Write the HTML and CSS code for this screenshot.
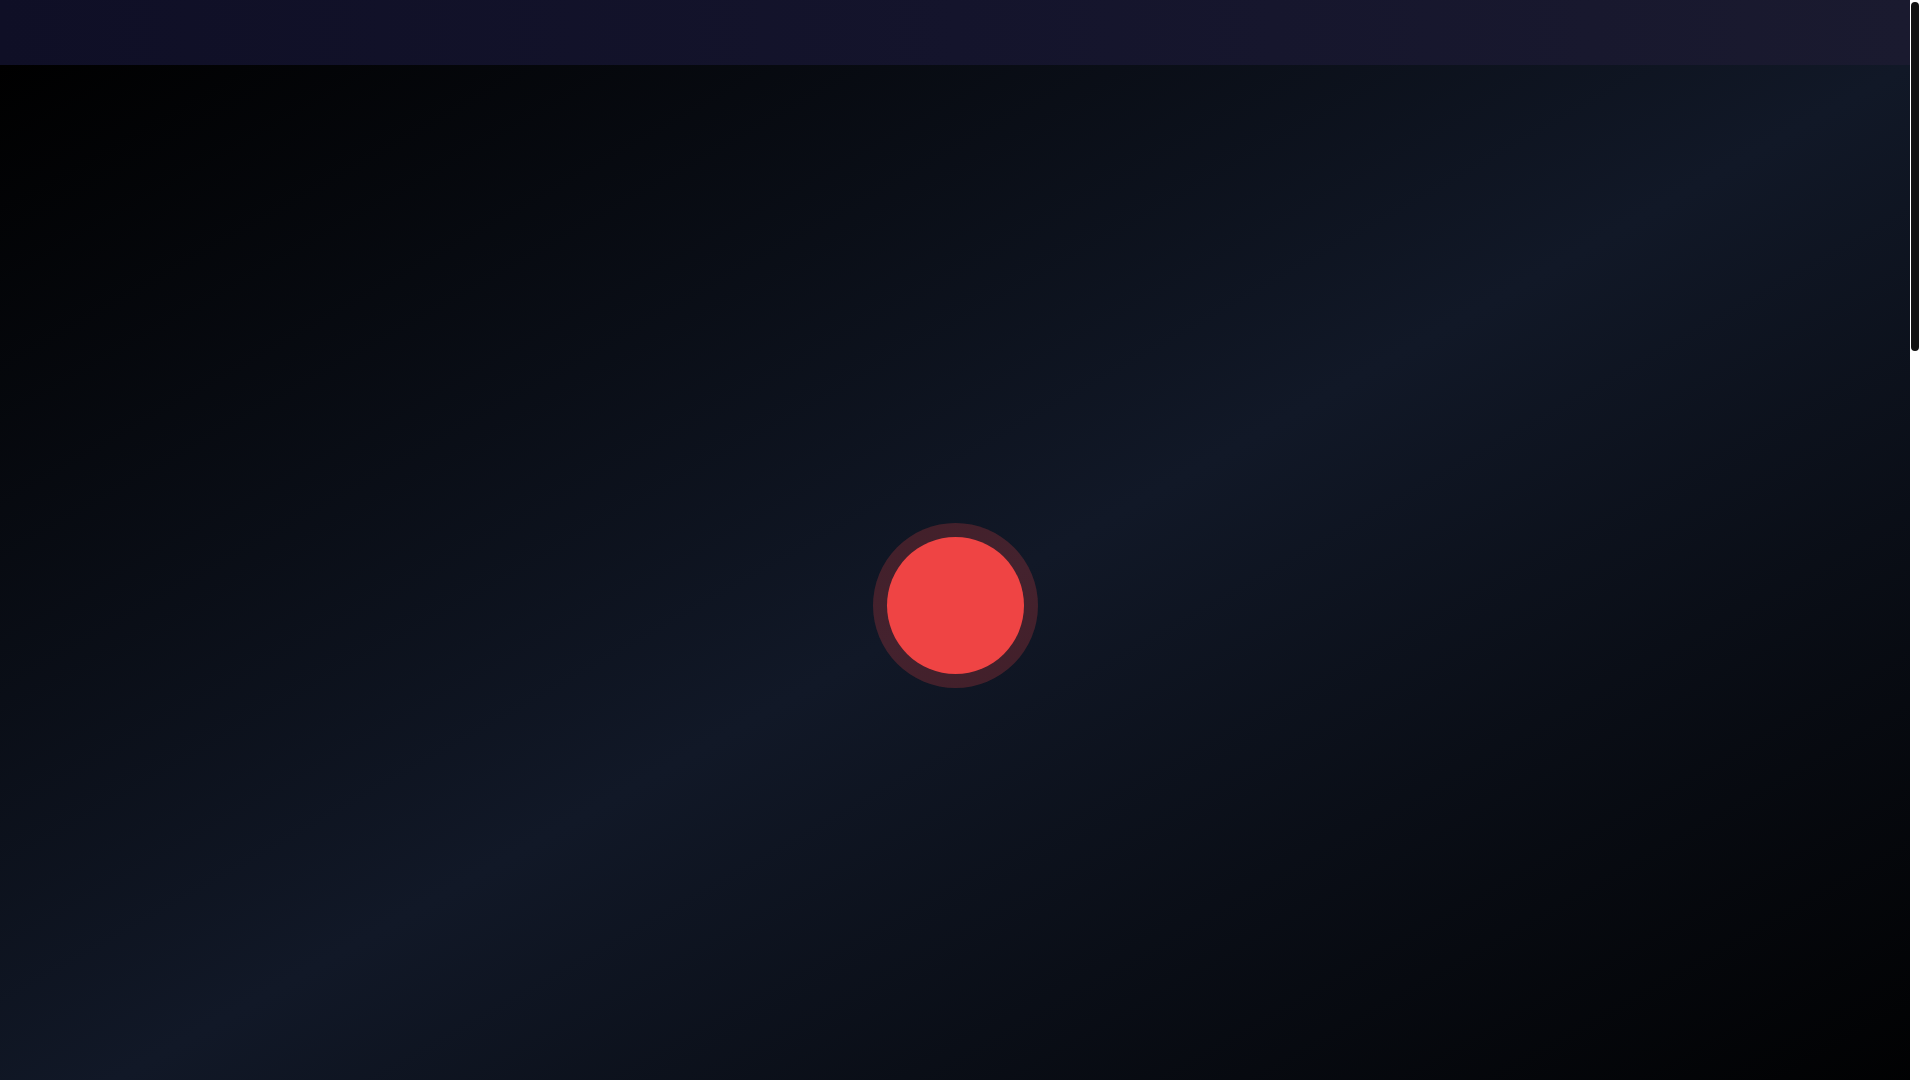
FILE: index.html
```html
<!DOCTYPE html>
<html lang="en">
<head>
<meta charset="utf-8">
<title>Recorder</title>
<link rel="stylesheet" href="styles.css">
</head>
<body>
<div class="page">
  <div class="content">
    <header class="topbar"></header>
    <main class="stage">
      <button class="record" aria-label="Record"></button>
    </main>
  </div>
  <div class="scrollbar" aria-hidden="true">
    <div class="thumb"></div>
  </div>
</div>
</body>
</html>
```

FILE: styles.css
```css
html, body {
  margin: 0;
  height: 100%;
  overflow: hidden;
  background: #000;
}
body {
  font-family: "Inter", "Liberation Sans", sans-serif;
}
.page {
  display: flex;
  height: 100vh;
}
.content {
  flex: 1;
  min-width: 0;
  display: flex;
  flex-direction: column;
}
.scrollbar {
  width: 10px;
  flex: 0 0 10px;
  background: #ffffff;
  padding: 2px 1px 0 1px;
  box-sizing: border-box;
}
.thumb {
  height: 349px;
  background: #111111;
  border-radius: 4px;
}
.topbar {
  height: 65px;
  flex: 0 0 65px;
  background: linear-gradient(to right, #0f0f26, #14142c 50%, #1a1a2f);
}
.stage {
  height: 1080px;
  flex: 0 0 1080px;
  display: flex;
  align-items: center;
  justify-content: center;
  background: linear-gradient(to bottom right, #000000, #111827 50%, #000000);
}
.record {
  width: 137px;
  height: 137px;
  border: none;
  padding: 0;
  border-radius: 50%;
  background: #ef4444;
  box-shadow: 0 0 0 14px rgba(239, 68, 68, 0.23);
  cursor: pointer;
}
```
